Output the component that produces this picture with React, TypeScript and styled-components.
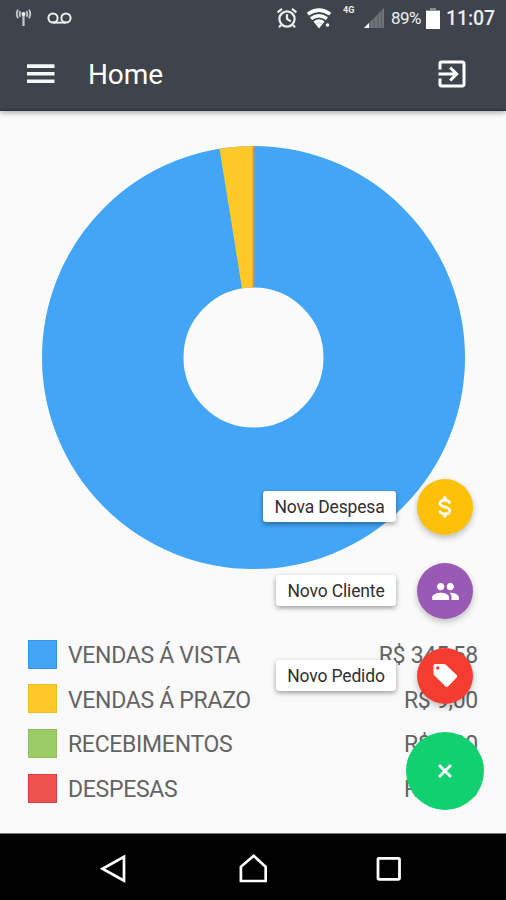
import React from "react";
import styled, { createGlobalStyle } from "styled-components";
import { MdExitToApp, MdPeople } from "react-icons/md";

const GlobalStyle = createGlobalStyle`
  * { box-sizing: border-box; }
  body { margin: 0; background: #fafafa; font-family: Roboto, "Liberation Sans", sans-serif; }
`;

const Screen = styled.div`
  position: relative;
  display: flex;
  flex-direction: column;
  width: 506px;
  height: 900px;
  overflow: hidden;
  background: #fafafa;
`;

const Header = styled.header`
  height: 111px;
  flex: none;
  background: #3f444c;
  color: #fff;
  border-bottom: 2px solid #34383e;
  box-shadow: 0 1px 6px rgba(0, 0, 0, 0.4);
`;

const StatusBar = styled.div`
  display: flex;
  align-items: center;
  height: 36px;
  padding: 0 11px 0 15px;
  color: #eceeef;
  svg { flex: none; display: block; }
`;

const Voicemail = styled.svg`
  margin-left: 15px;
`;

const Wifi = styled.svg`
  margin-left: 8px;
`;

const Spacer = styled.div`
  flex: 1;
`;

const Network = styled.span`
  align-self: flex-start;
  width: 13px;
  margin: 5px 8px 0 11px;
  font-size: 9px;
  font-weight: 700;
  line-height: 11px;
`;

const Percent = styled.span`
  width: 31px;
  margin: 0 4px 0 7px;
  font-size: 17px;
  letter-spacing: -0.55px;
  white-space: nowrap;
`;

const Clock = styled.span`
  width: 49px;
  margin-left: 6px;
  font-size: 19.5px;
  font-weight: 500;
  letter-spacing: -0.1px;
  white-space: nowrap;
`;

const Toolbar = styled.div`
  display: flex;
  align-items: center;
  height: 75px;
  padding: 0 36px 0 27px;
  svg { display: block; flex: none; }
`;

const Title = styled.h1`
  flex: 1;
  margin: 0 0 0 33px;
  padding-top: 2px;
  font-size: 28px;
  font-weight: 400;
  line-height: 36px;
  letter-spacing: -0.1px;
`;

const Content = styled.main`
  display: flex;
  flex-direction: column;
  flex: 1;
  padding: 35px 28px 0;
`;

const Chart = styled.svg`
  display: block;
  width: 424px;
  height: 424px;
  margin-left: 14px;
  flex: none;
`;

const Legend = styled.ul`
  list-style: none;
  margin: 62px 0 0;
  padding: 0;
`;

const LegendRow = styled.li`
  display: flex;
  align-items: center;
  height: 44.6px;
  color: #646464;
  font-size: 23px;
  line-height: 40px;
  letter-spacing: -0.3px;
  span { padding-top: 4px; }
`;

const Swatch = styled.i<{ $color: string; $edge: string }>`
  width: 29px;
  height: 29px;
  margin-right: 11px;
  background: ${(p) => p.$color};
  border: 1px solid ${(p) => p.$edge};
`;

const Amount = styled.span`
  margin-left: auto;
`;

const Actions = styled.div`
  position: absolute;
  right: 22px;
  top: 479px;
  display: flex;
  flex-direction: column;
  align-items: flex-end;
  gap: 28.3px;
`;

const Action = styled.div`
  display: flex;
  align-items: center;
  gap: 21px;
  margin-right: 11px;
`;

const ActionLabel = styled.span<{ $width: number }>`
  width: ${(p) => p.$width}px;
  height: 31px;
  margin-bottom: 1px;
  border-radius: 3px;
  background: #fff;
  color: #303030;
  box-shadow: 0 2px 5px rgba(0, 0, 0, 0.38);
  font-size: 17.5px;
  line-height: 32px;
  letter-spacing: -0.15px;
  text-align: center;
  white-space: nowrap;
`;

const RoundButton = styled.button<{ $color: string; $large?: boolean }>`
  display: flex;
  align-items: center;
  justify-content: center;
  width: ${(p) => (p.$large ? 78 : 56)}px;
  height: ${(p) => (p.$large ? 78 : 56)}px;
  padding: 0;
  border: 0;
  border-radius: 50%;
  background: ${(p) => p.$color};
  color: #fff;
  box-shadow: ${(p) => (p.$large ? "none" : "0 3px 6px rgba(0, 0, 0, 0.24)")};
`;

const NavBar = styled.nav`
  display: flex;
  justify-content: space-between;
  align-items: center;
  flex: none;
  height: 67px;
  padding: 4px 104px 0 99px;
  background: #000;
  border-top: 1px solid #777;
`;

const DollarIcon = () => (
  <svg width="16" height="22" viewBox="0 0 16 22" fill="none" stroke="#fff" strokeWidth="2.7">
    <path d="M12.6 7.4C12.2 5.2 10.6 4.2 7.8 4.2 5.2 4.2 3 5.2 3 7.4c0 2.4 2.3 3 4.8 3.6s4.9 1.4 4.9 3.7c0 2.2-2.2 3.2-4.9 3.2-2.9 0-4.8-1.1-5-3.4" />
    <path d="M7.8 .6v4M7.8 17.4v4" strokeWidth="3.4" />
  </svg>
);

const TagIcon = () => (
  <svg width="25" height="25" viewBox="0 0 25 25">
    <path
      fill="#fff"
      fillRule="evenodd"
      d="M.5 2.4Q.5.9 2 .9H11q.9 0 1.5.6l11.2 10.6q1.2 1.2 0 2.4l-8.7 8.9q-1.2 1.2-2.4 0L1.2 12.2Q.5 11.6.5 10.7ZM4.8 3.3a1.7 1.7 0 1 0 .01 0Z"
    />
  </svg>
);

const legend = [
  { label: "VENDAS Á VISTA", amount: "R$ 345,58", color: "#42a5f5", edge: "#3796e6" },
  { label: "VENDAS Á PRAZO", amount: "R$ 9,00", color: "#ffca28", edge: "#f0bb22" },
  { label: "RECEBIMENTOS", amount: "R$ 0,00", color: "#9ccc65", edge: "#8fc058" },
  { label: "DESPESAS", amount: "R$ 0,00", color: "#ef5350", edge: "#d93f42" },
];

const actions = [
  { label: "Nova Despesa", width: 133, color: "#ffc107", icon: <DollarIcon /> },
  { label: "Novo Cliente", width: 120, color: "#9b59b6", icon: <MdPeople size={29} /> },
  { label: "Novo Pedido", width: 120, color: "#f43d30", icon: <TagIcon /> },
];

function StatusIcons() {
  return (
    <StatusBar>
      <svg width="17" height="18" viewBox="0 0 17 18" fill="none" stroke="#c5c9cc" strokeWidth="1.8">
        <path d="M8.5 6v11" strokeWidth="2.2" />
        <circle cx="8.5" cy="5" r="2" fill="#eee" stroke="none" />
        <path d="M5.5 2.2Q3.8 5 5.5 7.8M11.5 2.2Q13.2 5 11.5 7.8M3 .8Q.5 5 3 9.2M14 .8Q16.5 5 14 9.2" />
      </svg>
      <Voicemail width="25" height="12" viewBox="0 0 25 12" fill="none" stroke="currentColor" strokeWidth="2">
        <circle cx="6" cy="6" r="4.6" />
        <circle cx="19" cy="6" r="4.6" />
        <path d="M6 10.6h13" />
      </Voicemail>
      <Spacer />
      <svg width="22" height="22" viewBox="0 0 22 22" fill="none" stroke="currentColor" strokeWidth="2.2">
        <circle cx="11" cy="12" r="7.6" />
        <path d="M11 7.2V12l3.8 2.4M1.6 5.4 6 1.8M20.4 5.4 16 1.8M5 18l-2 2.4M17 18l2 2.4" />
      </svg>
      <Wifi width="26" height="21" viewBox="0 0 26 21" fill="none" stroke="#fff" strokeWidth="3.5">
        <path d="M1.8 6.2Q13-2 24.2 6.2M5 10.7Q13 4.8 21 10.7M8.5 14.8Q13 11.3 17.5 14.8" />
        <path d="m9.5 16 3.5 4.4 3.5-4.4q-3.5-2-7 0" fill="#fff" stroke="none" />
        <circle cx="21.5" cy="17" r="1.8" fill="#fff" stroke="none" />
      </Wifi>
      <Network>4G</Network>
      <svg width="20" height="20" viewBox="0 0 20 20">
        <path d="M0 20 20 0v20z" fill="#6f7379" />
        <path d="M0 20l5-5v5z" fill="#fff" />
        <path d="M6 14v6M10 10v10M14 6v14M17.5 2v18" stroke="#555a61" strokeWidth=".8" />
      </svg>
      <Percent>89%</Percent>
      <svg width="14" height="21" viewBox="0 0 14 21">
        <path d="M4 0h6v2h4v3H0V2h4z" fill="#8a8d91" />
        <path d="M0 3h14v18H0z" fill="#fff" />
      </svg>
      <Clock>11:07</Clock>
    </StatusBar>
  );
}

export default function App() {
  return (
    <Screen>
      <GlobalStyle />
      <Header>
        <StatusIcons />
        <Toolbar>
          <svg width="28" height="20" viewBox="0 0 28 20" fill="#f4f8f8">
            <path d="M0 .3h27.5v3.6H0zM0 7.9h27.5v3.6H0zM0 15.5h27.5v3.6H0z" />
          </svg>
          <Title>Home</Title>
          <MdExitToApp size={36} color="#fff" />
        </Toolbar>
      </Header>

      <Content>
        <Chart viewBox="0.5 0.5 424 424">
          <circle cx="212" cy="212" r="140.75" fill="none" stroke="#42a5f5" strokeWidth="141.5" />
          <path d="M178 3.2A211.5 211.5 0 0 1 212 .5V142A70 70 0 0 0 200.5 142.9Z" fill="#ffca28" />
          <path d="M211.9 .5v141.3" stroke="#e58b50" strokeWidth="1.8" />
        </Chart>
        <Legend>
          {legend.map((item) => (
            <LegendRow key={item.label}>
              <Swatch $color={item.color} $edge={item.edge} />
              <span>{item.label}</span>
              <Amount>{item.amount}</Amount>
            </LegendRow>
          ))}
        </Legend>
      </Content>

      <Actions>
        {actions.map((action) => (
          <Action key={action.label}>
            <ActionLabel $width={action.width}>{action.label}</ActionLabel>
            <RoundButton $color={action.color}>{action.icon}</RoundButton>
          </Action>
        ))}
        <RoundButton $color="#10d070" $large>
          <svg width="14" height="14" viewBox="0 0 14 14" stroke="#fff" strokeWidth="2.8">
            <path d="m1 1 12 12M13 1 1 13" />
          </svg>
        </RoundButton>
      </Actions>

      <NavBar>
        <svg width="28" height="30" viewBox="0 0 28 30" fill="none" stroke="#fff" strokeWidth="2.7">
          <path d="M25 2.8v24L3.5 14.8z" />
        </svg>
        <svg width="30" height="30" viewBox="0 0 30 30" fill="none" stroke="#fff" strokeWidth="2.7">
          <path d="M3.9 27V12.8L16.7 1.8l12 11V27z" />
        </svg>
        <svg width="26" height="26" viewBox="0 0 26 26" fill="none" stroke="#fff" strokeWidth="2.8">
          <rect x="2" y="2.3" width="21.5" height="21" rx="1" />
        </svg>
      </NavBar>
    </Screen>
  );
}
